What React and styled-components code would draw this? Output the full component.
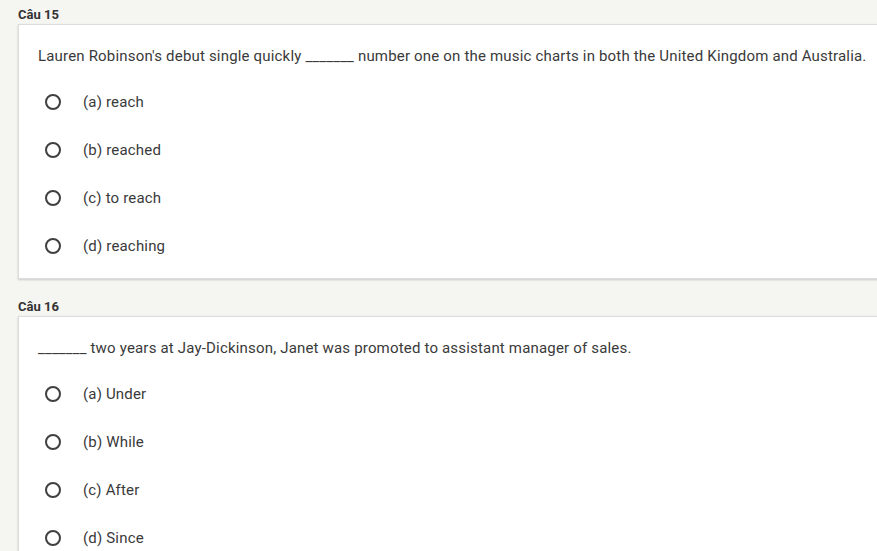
import React from 'react';
import styled, { createGlobalStyle } from 'styled-components';

const GlobalStyle = createGlobalStyle`
  html, body {
    margin: 0;
    padding: 0;
    background: #f5f5f2;
    overflow: hidden;
  }
  body {
    font-family: Roboto, 'Liberation Sans', sans-serif;
    color: #333;
  }
`;

const Page = styled.div`
  padding: 7px 0 0 18px;
  width: 900px;
`;

const Section = styled.section`
  margin-bottom: 20px;
`;

const Label = styled.div`
  font-size: 13px;
  font-weight: 700;
  line-height: 16px;
  color: #333;
  margin-bottom: 1px;
`;

const Card = styled.div`
  background: #fff;
  border: 1px solid #dcdcdc;
  box-shadow: 0 1px 2px rgba(0, 0, 0, 0.18);
  padding: 21px 0 8px 19px;
`;

const Question = styled.div`
  font-size: 15px;
  letter-spacing: 0.18px;
  line-height: 20px;
  color: #3a3a3a;
  white-space: nowrap;
  margin-bottom: 12px;
`;

const Option = styled.label`
  display: flex;
  align-items: center;
  height: 48px;
  font-size: 15px;
  letter-spacing: 0.18px;
  color: #3a3a3a;
`;

const Radio = styled.span`
  box-sizing: border-box;
  width: 16px;
  height: 16px;
  border: 2px solid #3f3f3f;
  border-radius: 50%;
  margin: 0 22px 0 7px;
`;

const questions = [
  {
    label: 'Câu 15',
    text: "Lauren Robinson's debut single quickly _______ number one on the music charts in both the United Kingdom and Australia.",
    options: ['(a) reach', '(b) reached', '(c) to reach', '(d) reaching'],
  },
  {
    label: 'Câu 16',
    text: '_______ two years at Jay-Dickinson, Janet was promoted to assistant manager of sales.',
    options: ['(a) Under', '(b) While', '(c) After', '(d) Since'],
  },
];

const App = () => (
  <>
    <GlobalStyle />
    <Page>
      {questions.map(q => (
        <Section key={q.label}>
          <Label>{q.label}</Label>
          <Card>
            <Question>{q.text}</Question>
            {q.options.map(opt => (
              <Option key={opt}>
                <Radio />
                {opt}
              </Option>
            ))}
          </Card>
        </Section>
      ))}
    </Page>
  </>
);

export default App;
